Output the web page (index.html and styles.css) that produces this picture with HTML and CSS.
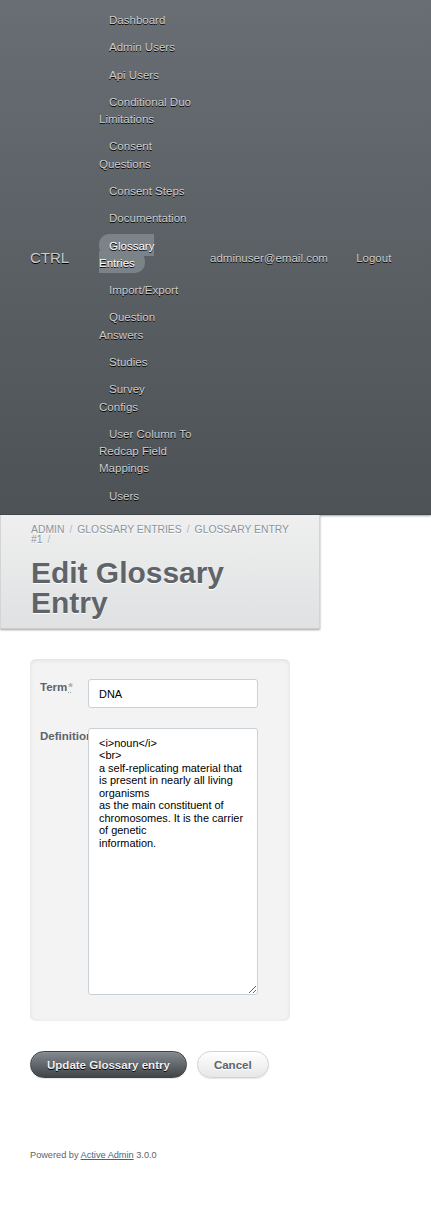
FILE: index.html
```html
<!DOCTYPE html>
<html>
<head>
<meta charset="utf-8">
<title>Edit Glossary Entry</title>
<link rel="stylesheet" href="styles.css">
</head>
<body>
<div class="header">
  <h1 class="site-title">CTRL</h1>
  <ul class="tabs">
    <li><a href="#">Dashboard</a></li>
    <li><a href="#">Admin Users</a></li>
    <li><a href="#">Api Users</a></li>
    <li><a href="#">Conditional Duo Limitations</a></li>
    <li><a href="#">Consent Questions</a></li>
    <li><a href="#">Consent Steps</a></li>
    <li><a href="#">Documentation</a></li>
    <li class="current"><a href="#">Glossary Entries</a></li>
    <li><a href="#">Import/Export</a></li>
    <li><a href="#">Question Answers</a></li>
    <li><a href="#">Studies</a></li>
    <li><a href="#">Survey Configs</a></li>
    <li><a href="#">User Column To Redcap Field Mappings</a></li>
    <li><a href="#">Users</a></li>
  </ul>
  <ul class="utility-nav">
    <li><a href="#">adminuser@email.com</a></li>
    <li class="logout"><a href="#">Logout</a></li>
  </ul>
</div>

<div class="title-bar">
  <div class="breadcrumb"><a href="#">Admin</a><span class="sep">/</span><a href="#">Glossary Entries</a><span class="sep">/</span><a href="#">Glossary Entry #1</a><span class="sep">/</span></div>
  <h2 class="page-title">Edit Glossary Entry</h2>
</div>

<div class="content">
  <form class="entry-form">
    <fieldset class="inputs">
      <ol>
        <li class="field">
          <label class="field-label">Term<abbr title="required">*</abbr></label>
          <input class="text-input" type="text" value="DNA">
        </li>
        <li class="field">
          <label class="field-label">Definition</label>
          <textarea class="text-area">&lt;i&gt;noun&lt;/i&gt;
&lt;br&gt;
a self-replicating material that is present in nearly all living organisms
as the main constituent of chromosomes. It is the carrier of genetic
information.</textarea>
        </li>
      </ol>
    </fieldset>
    <fieldset class="actions">
      <button type="button" class="btn-primary">Update Glossary entry</button>
      <a href="#" class="btn-cancel">Cancel</a>
    </fieldset>
  </form>
</div>

<div class="footer">
  Powered by <a href="#">Active Admin</a> 3.0.0
</div>
</body>
</html>
```

FILE: styles.css
```css
* { box-sizing: border-box; }
html, body { margin: 0; padding: 0; }
body {
  font-family: "Liberation Sans", Arial, Helvetica, sans-serif;
  font-size: 11.52px;
  line-height: 150%;
  color: #323537;
  background: #fff;
}
a { color: #38678b; }

.header {
  display: flex;
  align-items: center;
  width: 100%;
  padding: 5px 0 0 0;
  background: linear-gradient(180deg, #686e73 0%, #4d5256 100%);
  border-bottom: 1px solid #44484b;
  box-shadow: 0 1px 2px rgba(0,0,0,0.37);
  color: #cdcdcd;
  text-shadow: #000 0 1px 0;
}
.site-title {
  flex: 0 0 90px;
  margin: 0;
  padding: 0 0 3px 30px;
  font-size: 14.98px;
  font-weight: normal;
  line-height: 1.2;
  color: #cdcdcd;
  white-space: nowrap;
}
.tabs {
  flex: 0 0 112px;
  list-style: none;
  margin: 0;
  padding: 7px 0 0 3px;
  display: flex;
  flex-direction: column;
  align-items: flex-start;
}
.tabs li {
  margin: 0 6px 10px 6px;
  max-width: 97px;
}
.tabs li:last-child { margin-bottom: 9px; }
.tabs a {
  color: #cdcdcd;
  text-decoration: none;
  padding: 6px 10px 4px 10px;
  border-radius: 10px;
}
.tabs li.current a {
  background: #7b8389;
  color: #fff;
}
.utility-nav {
  flex: 1 1 auto;
  list-style: none;
  margin: 0;
  padding: 0 32px 2px 0;
  text-align: right;
  white-space: nowrap;
}
.utility-nav li { display: inline; }
.utility-nav li.logout { margin-left: 9px; }
.utility-nav a {
  color: #cdcdcd;
  text-decoration: none;
  padding: 4px 8px 3px 8px;
}

.title-bar {
  width: 320px;
  padding: 10px 30px 10px 30px;
  background: linear-gradient(180deg, #efefef 0%, #dfe1e2 100%);
  border-bottom: 1px solid #cdcdcd;
  border-left: 1px solid #d4d4d4;
  border-right: 1px solid #d4d4d4;
  box-shadow: 0 1px 2px rgba(0,0,0,0.37);
  text-shadow: #fff 0 1px 0;
}
.breadcrumb {
  font-size: 10.37px;
  line-height: 1em;
  margin-bottom: 12px;
  text-transform: uppercase;
  color: #aab2ba;
}
.breadcrumb a { color: #8a949e; text-decoration: none; }
.breadcrumb .sep { margin: 0 5px; color: #aab2ba; }
.page-title {
  margin: 0;
  font-size: 29.95px;
  line-height: 30px;
  font-weight: bold;
  color: #5e6469;
}

.content {
  width: 320px;
  padding: 30px 30px 30px 30px;
}
.entry-form fieldset {
  border: 0;
  margin: 0;
}
.inputs {
  background: #f3f3f3;
  border-radius: 6px;
  box-shadow: inset 0 1px 4px #dddddd;
  padding: 10px 0 16px 0;
  margin-bottom: 20px !important;
}
.inputs ol {
  list-style: none;
  margin: 0;
  padding: 0;
}
.field {
  display: flex;
  align-items: flex-start;
  padding: 10px;
}
.field-label {
  flex: 0 0 48px;
  width: 48px;
  white-space: nowrap;
  font-weight: bold;
  color: #5e6469;
  line-height: 17px;
}
.field-label abbr {
  color: #aaaaaa;
  font-weight: bold;
  margin-left: 1px;
  text-decoration: underline dotted;
}
.text-input, .text-area {
  width: 170px;
  border: 1px solid #c9d0d6;
  border-radius: 3px;
  font-family: "Liberation Sans", Arial, Helvetica, sans-serif;
  font-size: 10.94px;
  color: #000;
  background: #fff;
  padding: 8px 10px 7px 10px;
  margin: 0;
}
.text-input { height: 29px; }
.text-area {
  height: 267px;
  line-height: 12.5px;
  resize: vertical;
}

.actions {
  padding: 10px 0 !important;
  display: flex;
  gap: 10px;
  align-items: center;
}
.btn-primary, .btn-cancel {
  display: inline-block;
  font-family: "Liberation Sans", Arial, Helvetica, sans-serif;
  font-size: 11.52px;
  font-weight: bold;
  line-height: 12px;
  padding: 7px 16px 6px 16px;
  border-radius: 200px;
  height: 27px;
  text-decoration: none;
  cursor: pointer;
}
.btn-primary {
  background: linear-gradient(180deg, #838a90 0%, #414549 100%);
  border: 1px solid #3e4245;
  box-shadow: 0 1px 1px rgba(0,0,0,0.1), inset 0 1px 0 0 #8a9095;
  color: #efefef;
  text-shadow: #000 0 1px 0;
}
.btn-cancel {
  background: linear-gradient(180deg, #ffffff 0%, #e7e7e7 100%);
  border: 1px solid #d3d3d3;
  box-shadow: 0 1px 1px rgba(0,0,0,0.1);
  color: #5e6469;
  text-shadow: #fff 0 1px 0;
}

.footer {
  padding: 31px 30px 30px 30px;
  font-size: 9.2px;
  line-height: 150%;
  color: #5e6469;
}
.footer a { color: #38678b; }
```
